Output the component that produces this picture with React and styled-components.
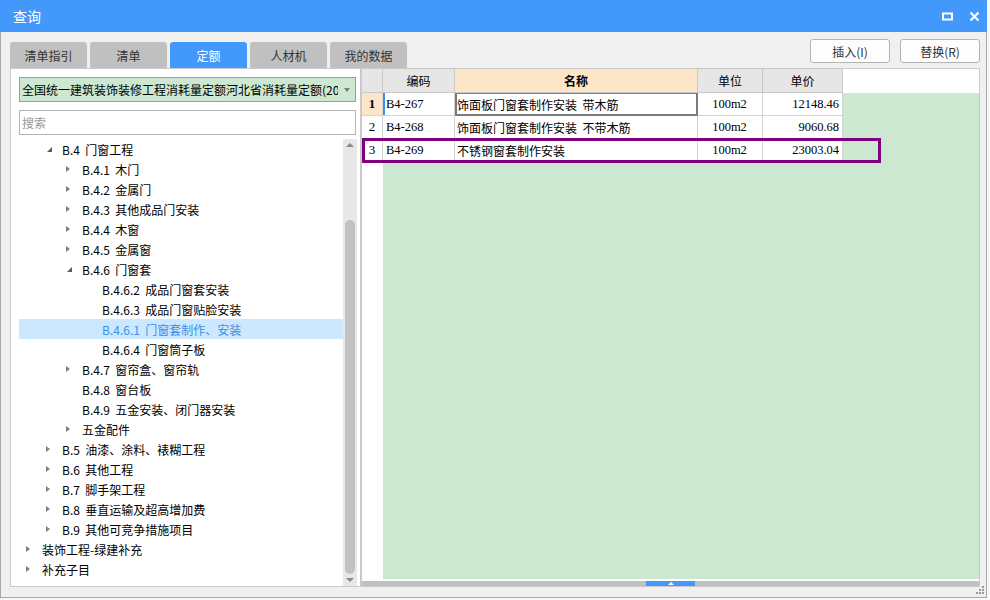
import React from 'react';
import styled, { createGlobalStyle } from 'styled-components';

const GlobalStyle = createGlobalStyle`
  html, body {
    margin: 0;
    padding: 0;
    background: #f7f7f7;
  }
  body {
    font-family: "Noto Sans CJK SC", "Microsoft YaHei", sans-serif;
    font-size: 12px;
    color: #000;
  }
`;

const BLUE = '#4398fb';

const tabs = ['清单指引', '清单', '定额', '人材机', '我的数据'];

const tree = [
  { level: 1, arrow: 'open', label: 'B.4 门窗工程' },
  { level: 2, arrow: 'closed', label: 'B.4.1 木门' },
  { level: 2, arrow: 'closed', label: 'B.4.2 金属门' },
  { level: 2, arrow: 'closed', label: 'B.4.3 其他成品门安装' },
  { level: 2, arrow: 'closed', label: 'B.4.4 木窗' },
  { level: 2, arrow: 'closed', label: 'B.4.5 金属窗' },
  { level: 2, arrow: 'open', label: 'B.4.6 门窗套' },
  { level: 3, label: 'B.4.6.2 成品门窗套安装' },
  { level: 3, label: 'B.4.6.3 成品门窗贴脸安装' },
  { level: 3, label: 'B.4.6.1 门窗套制作、安装', selected: true },
  { level: 3, label: 'B.4.6.4 门窗筒子板' },
  { level: 2, arrow: 'closed', label: 'B.4.7 窗帘盒、窗帘轨' },
  { level: 2, label: 'B.4.8 窗台板' },
  { level: 2, label: 'B.4.9 五金安装、闭门器安装' },
  { level: 2, arrow: 'closed', label: '五金配件' },
  { level: 1, arrow: 'closed', label: 'B.5 油漆、涂料、裱糊工程' },
  { level: 1, arrow: 'closed', label: 'B.6 其他工程' },
  { level: 1, arrow: 'closed', label: 'B.7 脚手架工程' },
  { level: 1, arrow: 'closed', label: 'B.8 垂直运输及超高增加费' },
  { level: 1, arrow: 'closed', label: 'B.9 其他可竞争措施项目' },
  { level: 0, arrow: 'closed', label: '装饰工程-绿建补充' },
  { level: 0, arrow: 'closed', label: '补充子目' },
];

const rows = [
  { no: '1', code: 'B4-267', name: '饰面板门窗套制作安装  带木筋', unit: '100m2', price: '12148.46', active: true },
  { no: '2', code: 'B4-268', name: '饰面板门窗套制作安装  不带木筋', unit: '100m2', price: '9060.68' },
  { no: '3', code: 'B4-269', name: '不锈钢窗套制作安装', unit: '100m2', price: '23003.04' },
];

const Window = styled.div`
  position: relative;
  width: 987px;
  height: 598px;
  box-sizing: border-box;
  border: 1px solid #a8a8a8;
  border-top: none;
  background: #f0f0f0;
  display: flex;
  flex-direction: column;
`;

const TitleBar = styled.div`
  height: 32px;
  margin: 0 -1px;
  flex: none;
  background: ${BLUE};
  display: flex;
  align-items: center;
  justify-content: space-between;
  padding: 0 7px 0 13px;
  color: #fff;
  font-size: 14px;
`;

const WinControls = styled.div`
  display: flex;
  align-items: center;
  gap: 16px;
`;

const Body = styled.div`
  flex: none;
  padding: 7px 6px 0 9px;
  display: flex;
  flex-direction: column;
`;

const Header = styled.div`
  height: 29px;
  display: flex;
  justify-content: space-between;
`;

const Tabs = styled.div`
  display: flex;
  gap: 3px;
  align-self: flex-end;
`;

const Tab = styled.div`
  width: 77px;
  height: 26px;
  border-radius: 3px 3px 0 0;
  background: ${(p) => (p.$active ? BLUE : '#c0c0c0')};
  color: ${(p) => (p.$active ? '#fff' : '#333')};
  display: flex;
  align-items: center;
  justify-content: center;
  font-size: 12px;
`;

const Buttons = styled.div`
  display: flex;
  gap: 10px;
  align-self: flex-start;
`;

const Button = styled.div`
  width: 80px;
  height: 24px;
  box-sizing: border-box;
  border: 1px solid #b4b4b4;
  border-radius: 3px;
  background: #fdfdfd;
  color: #333;
  display: flex;
  align-items: center;
  justify-content: center;
  font-size: 12px;
`;

const Content = styled.div`
  height: 519px;
  display: flex;
`;

const LeftPanel = styled.div`
  width: 351px;
  box-sizing: border-box;
  border: 1px solid #c9c9c9;
  background: #fff;
  display: flex;
  flex-direction: column;
`;

const Select = styled.div`
  margin: 8px 4px 0 8px;
  height: 25px;
  box-sizing: border-box;
  border: 1px solid #5fa8f6;
  background: #cde8d0;
  display: flex;
  align-items: center;
  padding-left: 2px;
`;

const SelectText = styled.div`
  flex: 1;
  overflow: hidden;
  white-space: nowrap;
`;

const SelectArrow = styled.div`
  width: 17px;
  display: flex;
  justify-content: center;
  &::after {
    content: '';
    border-top: 4px solid #7a7a7a;
    border-left: 3.5px solid transparent;
    border-right: 3.5px solid transparent;
  }
`;

const Search = styled.div`
  margin: 8px 4px 0 8px;
  height: 25px;
  box-sizing: border-box;
  border: 1px solid #b4b4b4;
  display: flex;
  align-items: center;
  padding-left: 2px;
  color: #999;
`;

const TreeArea = styled.div`
  margin-top: 4px;
  flex: 1;
  display: flex;
  min-height: 0;
`;

const TreeList = styled.div`
  flex: 1;
  padding: 0 0 0 8px;
`;

const TreeRow = styled.div`
  height: 20px;
  display: flex;
  align-items: center;
  padding-left: ${(p) => p.$level * 20}px;
  background: ${(p) => (p.$selected ? '#cce8ff' : 'transparent')};
  color: ${(p) => (p.$selected ? '#3d8fe8' : '#000')};
  white-space: pre;
`;

const ArrowSlot = styled.span`
  width: 23px;
  flex: none;
  height: 20px;
  position: relative;
`;

const Caret = styled.span`
  position: absolute;
  width: 0;
  height: 0;
  ${(p) =>
    p.$open
      ? `left: 8px; top: 8px;
         border-bottom: 5px solid #5a5a5a;
         border-left: 5px solid transparent;`
      : `left: 7px; top: 6.5px;
         border-left: 4px solid #808080;
         border-top: 3.5px solid transparent;
         border-bottom: 3.5px solid transparent;`}
`;

const VScroll = styled.div`
  width: 14px;
  margin-right: 3px;
  background: #e8e8e8;
  display: flex;
  flex-direction: column;
  align-items: center;
`;

const ScrollArrow = styled.div`
  height: 12px;
  flex: none;
  display: flex;
  align-items: center;
  justify-content: center;
  &::after {
    content: '';
    border-left: 4px solid transparent;
    border-right: 4px solid transparent;
    ${(p) => (p.$down ? 'border-top: 4px solid #8a8a8a;' : 'border-bottom: 4px solid #8a8a8a;')}
  }
`;

const Thumb = styled.div`
  width: 10px;
  border-radius: 5px;
  background: #c2c2c2;
  margin-top: ${(p) => p.$offset}px;
  height: ${(p) => p.$size}px;
`;

const RightPanel = styled.div`
  position: relative;
  flex: 1;
  box-sizing: border-box;
  border: 1px solid #c9c9c9;
  background: #fff;
  display: flex;
  flex-direction: column;
`;

const COLS = '21px 72px 243px 65px 80px 1fr';

const GridRow = styled.div`
  display: grid;
  grid-template-columns: ${COLS};
  height: ${(p) => (p.$head ? 24 : 23)}px;
`;

const HeadCell = styled.div`
  box-sizing: border-box;
  border-right: 1px solid #c8c8c8;
  border-bottom: 1px solid #c8c8c8;
  background: ${(p) => (p.$hot ? '#fde5c8' : '#e6e6e6')};
  font-weight: ${(p) => (p.$hot ? 700 : 400)};
  display: flex;
  align-items: center;
  justify-content: center;
  font-size: 12px;
`;

const HeadBlank = styled.div`
  background: #fff;
`;

const Cell = styled.div`
  box-sizing: border-box;
  border-right: 1px solid #d4d4d4;
  border-bottom: 1px solid #d4d4d4;
  display: flex;
  align-items: center;
  overflow: hidden;
  white-space: pre;
  justify-content: ${(p) => p.$align || 'flex-start'};
  padding: 0 3px 0 2px;
`;

const NoCell = styled(Cell)`
  justify-content: center;
  padding: 0;
  font-family: "Liberation Serif", serif;
  font-weight: ${(p) => (p.$active ? 700 : 400)};
  font-size: 13px;
  background: ${(p) => (p.$active ? '#fde5c8' : '#fff')};
`;

const Num = styled.span`
  font-family: "Liberation Serif", serif;
  font-size: 12.5px;
`;

const CodeCell = styled(Cell)`
  ${(p) => p.$mark && 'box-shadow: inset 2px 0 0 #3d8fe8;'}
  padding-left: 3px;
`;

const NameCell = styled(Cell)`
  ${(p) =>
    p.$focus &&
    `border: 2px solid #7b7b7b; border-top: 1px solid #3d8fe8; padding-left: 0;`}
`;

const GreenCell = styled.div`
  background: #cde8d1;
`;

const Filler = styled.div`
  flex: 1;
  display: grid;
  grid-template-columns: 21px 1fr;
`;

const HScroll = styled.div`
  margin-top: 2px;
  height: 5px;
  background: #c0c0c0;
  display: flex;
  justify-content: center;
`;

const HThumb = styled.div`
  width: 49px;
  background: ${BLUE};
  display: flex;
  justify-content: center;
  align-items: center;
  &::after {
    content: '';
    border-bottom: 3px solid #fff;
    border-left: 3px solid transparent;
    border-right: 3px solid transparent;
  }
`;

const Highlight = styled.div`
  position: absolute;
  left: 0;
  top: 69px;
  width: 519px;
  height: 25px;
  box-sizing: border-box;
  border: 3px solid #800080;
  pointer-events: none;
`;

const Grip = styled.svg`
  position: absolute;
  right: 1px;
  bottom: 2px;
`;

const MaxIcon = () => (
  <svg width="11" height="9" viewBox="0 0 11 9">
    <rect x="1" y="1.5" width="9" height="6" fill="none" stroke="#fff" strokeWidth="2" />
  </svg>
);

const CloseIcon = () => (
  <svg width="11" height="11" viewBox="0 0 11 11">
    <path d="M1.5 1.5 L9.5 9.5 M9.5 1.5 L1.5 9.5" stroke="#fff" strokeWidth="2.2" />
  </svg>
);

const App = () => {
  return (
    <>
      <GlobalStyle />
      <Window>
        <TitleBar>
          <span>查询</span>
          <WinControls>
            <MaxIcon />
            <CloseIcon />
          </WinControls>
        </TitleBar>
        <Body>
          <Header>
            <Tabs>
              {tabs.map((t) => (
                <Tab key={t} $active={t === '定额'}>{t}</Tab>
              ))}
            </Tabs>
            <Buttons>
              <Button>插入(I)</Button>
              <Button>替换(R)</Button>
            </Buttons>
          </Header>
          <Content>
            <LeftPanel>
              <Select>
                <SelectText>全国统一建筑装饰装修工程消耗量定额河北省消耗量定额(2012)</SelectText>
                <SelectArrow />
              </Select>
              <Search>搜索</Search>
              <TreeArea>
                <TreeList>
                  {tree.map((n) => (
                    <TreeRow key={n.label} $level={n.level} $selected={n.selected}>
                      <ArrowSlot>{n.arrow && <Caret $open={n.arrow === 'open'} />}</ArrowSlot>
                      {n.label.replace(' ', '  ')}
                    </TreeRow>
                  ))}
                </TreeList>
                <VScroll>
                  <ScrollArrow />
                  <Thumb $offset={69} $size={354} />
                  <div style={{ flex: 1 }} />
                  <ScrollArrow $down />
                </VScroll>
              </TreeArea>
            </LeftPanel>
            <RightPanel>
              <GridRow $head>
                <HeadCell />
                <HeadCell>编码</HeadCell>
                <HeadCell $hot>名称</HeadCell>
                <HeadCell>单位</HeadCell>
                <HeadCell>单价</HeadCell>
                <HeadBlank />
              </GridRow>
              {rows.map((r) => (
                <GridRow key={r.no}>
                  <NoCell $active={r.active}>{r.no}</NoCell>
                  <CodeCell $mark={r.active}><Num>{r.code}</Num></CodeCell>
                  <NameCell $focus={r.active}>{r.name}</NameCell>
                  <Cell $align="center"><Num>{r.unit}</Num></Cell>
                  <Cell $align="flex-end"><Num>{r.price}</Num></Cell>
                  <GreenCell />
                </GridRow>
              ))}
              <Filler>
                <div />
                <GreenCell />
              </Filler>
              <HScroll>
                <HThumb />
              </HScroll>
              <Highlight />
            </RightPanel>
          </Content>
        </Body>
        <Grip width="9" height="9" viewBox="0 0 9 9">
          <g fill="#9a9a9a">
            <rect x="6" y="0" width="2" height="2" />
            <rect x="3" y="3" width="2" height="2" />
            <rect x="6" y="3" width="2" height="2" />
            <rect x="0" y="6" width="2" height="2" />
            <rect x="3" y="6" width="2" height="2" />
            <rect x="6" y="6" width="2" height="2" />
          </g>
        </Grip>
      </Window>
    </>
  );
};

export default App;
